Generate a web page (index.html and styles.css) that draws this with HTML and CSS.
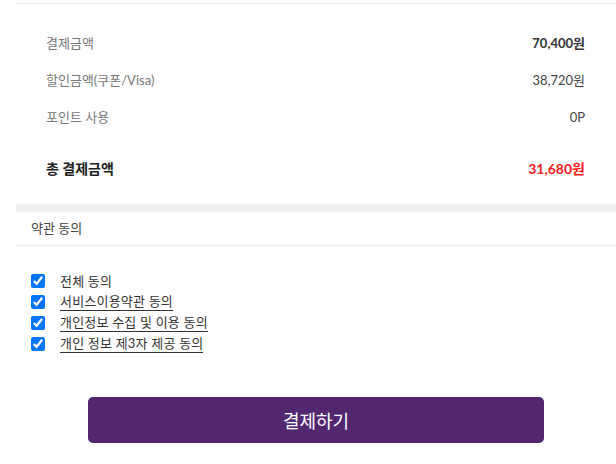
FILE: index.html
```html
<!DOCTYPE html>
<html lang="ko">
<head>
<meta charset="utf-8">
<link rel="stylesheet" href="styles.css">
</head>
<body>
<div class="page">
  <section class="summary">
    <div class="row"><span class="label">결제금액</span><span class="value strong">70,400원</span></div>
    <div class="row"><span class="label">할인금액(쿠폰/Visa)</span><span class="value">38,720원</span></div>
    <div class="row"><span class="label">포인트 사용</span><span class="value">0P</span></div>
    <div class="row total"><span class="label">총 결제금액</span><span class="value red">31,680원</span></div>
  </section>
  <div class="band"></div>
  <div class="terms-title">약관 동의</div>
  <ul class="terms">
    <li><label><input type="checkbox" checked><span class="text">전체 동의</span></label></li>
    <li><label><input type="checkbox" checked><span class="text link">서비스이용약관 동의</span></label></li>
    <li><label><input type="checkbox" checked><span class="text link">개인정보 수집 및 이용 동의</span></label></li>
    <li><label><input type="checkbox" checked><span class="text link">개인 정보 제3자 제공 동의</span></label></li>
  </ul>
  <div class="actions">
    <button class="pay" type="button">결제하기</button>
  </div>
</div>
</body>
</html>
```

FILE: styles.css
```css
* { box-sizing: border-box; }
html, body { margin: 0; padding: 0; background: #fff; }
body {
  font-family: "Lato", "Noto Sans CJK KR", sans-serif;
  color: #333;
  width: 616px;
  height: 464px;
  overflow: hidden;
}
.page { padding-top: 3px; padding-left: 16px; }
.summary {
  border-top: 1px solid #ececec;
  padding: 20px 31px 18px 30px;
}
.row {
  display: flex;
  justify-content: space-between;
  align-items: center;
  height: 37px;
  font-size: 13px;
}
.label { color: #777; }
.value { color: #444; }
.strong { font-weight: 700; color: #333; }
.row.total { margin-top: 14px; height: 37px; font-size: 14px; }
.row.total .label { color: #222; font-weight: 700; }
.red { color: #ff1a1a; font-weight: 700; }
.band { height: 8px; background: #f1f1f1; }
.terms-title {
  font-size: 13px;
  color: #444;
  padding-left: 15px;
  height: 34px;
  line-height: 32px;
  border-bottom: 1px solid #eee;
}
.terms {
  list-style: none;
  margin: 0;
  padding: 24px 0 0 15px;
}
.terms li { height: 21px; display: flex; align-items: center; }
.terms label { display: flex; align-items: center; cursor: pointer; }
.terms input {
  width: 14px;
  height: 14px;
  margin: 0 15px 0 0;
  accent-color: #0075ff;
}
.text { font-size: 13px; color: #333; line-height: 18px; letter-spacing: 0.2px; }
.text.link { border-bottom: 1px solid #333; }
.actions { padding: 43px 72px 0 72px; }
.pay {
  display: block;
  width: 456px;
  height: 46px;
  border: 0;
  border-radius: 5px;
  background: #52276f;
  color: #fff;
  font-family: "Noto Sans CJK KR", sans-serif;
  font-size: 18px;
  cursor: pointer;
}
```
